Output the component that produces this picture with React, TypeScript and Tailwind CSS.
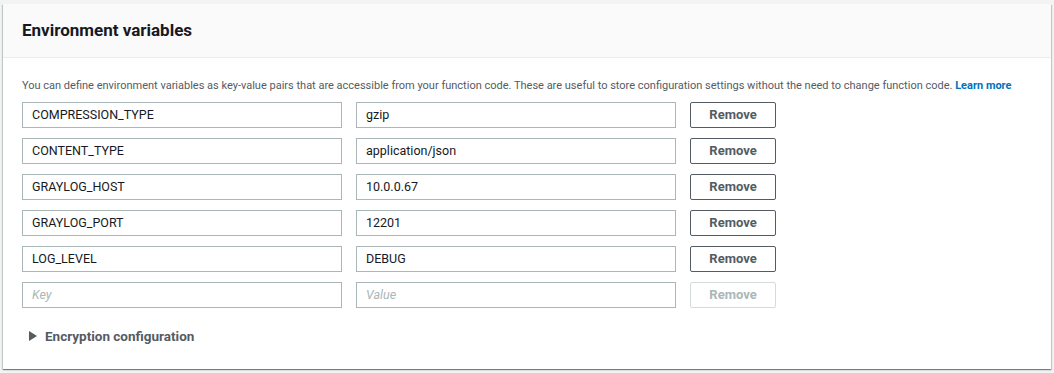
import React from "react";

const vars = [
    { key: "COMPRESSION_TYPE", value: "gzip" },
    { key: "CONTENT_TYPE", value: "application/json" },
    { key: "GRAYLOG_HOST", value: "10.0.0.67" },
    { key: "GRAYLOG_PORT", value: "12201" },
    { key: "LOG_LEVEL", value: "DEBUG" },
];

const Field: React.FC<{ text?: string; placeholder?: string }> = ({ text, placeholder }) => (
    <div className="flex h-[26px] w-[320px] items-center border border-[#aab7b8] bg-white px-[9px] text-[12.5px]">
        {text ? (
            <span className="text-[#16191f]">{text}</span>
        ) : (
            <span className="italic text-[#aab7b8]">{placeholder}</span>
        )}
    </div>
);

const RemoveButton: React.FC<{ disabled?: boolean }> = ({ disabled }) => (
    <div
        className={`flex h-[26px] w-[86px] items-center justify-center rounded-[2px] border text-[13px] font-bold ${
            disabled ? "border-[#d5dbdb] text-[#aab7b8]" : "border-[#545b64] text-[#545b64]"
        }`}
    >
        Remove
    </div>
);

export default function App() {
    return (
        <div
            className="min-h-screen bg-[#f2f3f3] pl-[3px] pr-[3px] pt-[4px]"
            style={{ fontFamily: "Roboto, Arial, sans-serif" }}
        >
            <div className="h-[365px] w-[1048px] bg-white shadow-[0_1px_1px_0_rgba(0,28,36,0.35),1px_1px_1px_0_rgba(0,28,36,0.15),-1px_1px_1px_0_rgba(0,28,36,0.15)]">
                {/* header */}
                <div className="flex h-[54px] items-center border-b border-[#eaeded] bg-[#fafafa] px-[19px]">
                    <h2 className="text-[17px] font-bold text-[#16191f]">Environment variables</h2>
                </div>

                <div className="px-[19px] pt-[19px]">
                    <p className="mb-[7px] whitespace-nowrap text-[11px] leading-[18px] text-[#545b64]">
                        You can define environment variables as key-value pairs that are accessible from your function
                        code. These are useful to store configuration settings without the need to change function code.{" "}
                        <span className="font-bold text-[#0073bb]">Learn more</span>
                    </p>

                    <div className="flex flex-col gap-[10px]">
                        {vars.map((v) => (
                            <div key={v.key} className="flex gap-[14px]">
                                <Field text={v.key} />
                                <Field text={v.value} />
                                <RemoveButton />
                            </div>
                        ))}
                        <div className="flex gap-[14px]">
                            <Field placeholder="Key" />
                            <Field placeholder="Value" />
                            <RemoveButton disabled />
                        </div>
                    </div>

                    <div className="mt-[19px] flex items-center gap-[8px] pl-[7px] text-[13.5px] font-bold leading-[18px] text-[#545b64]">
                        <svg width="8" height="10" viewBox="0 0 8 10">
                            <path d="M0 0 L8 5 L0 10 Z" fill="#545b64" />
                        </svg>
                        <span>Encryption configuration</span>
                    </div>
                </div>
            </div>
        </div>
    );
}
